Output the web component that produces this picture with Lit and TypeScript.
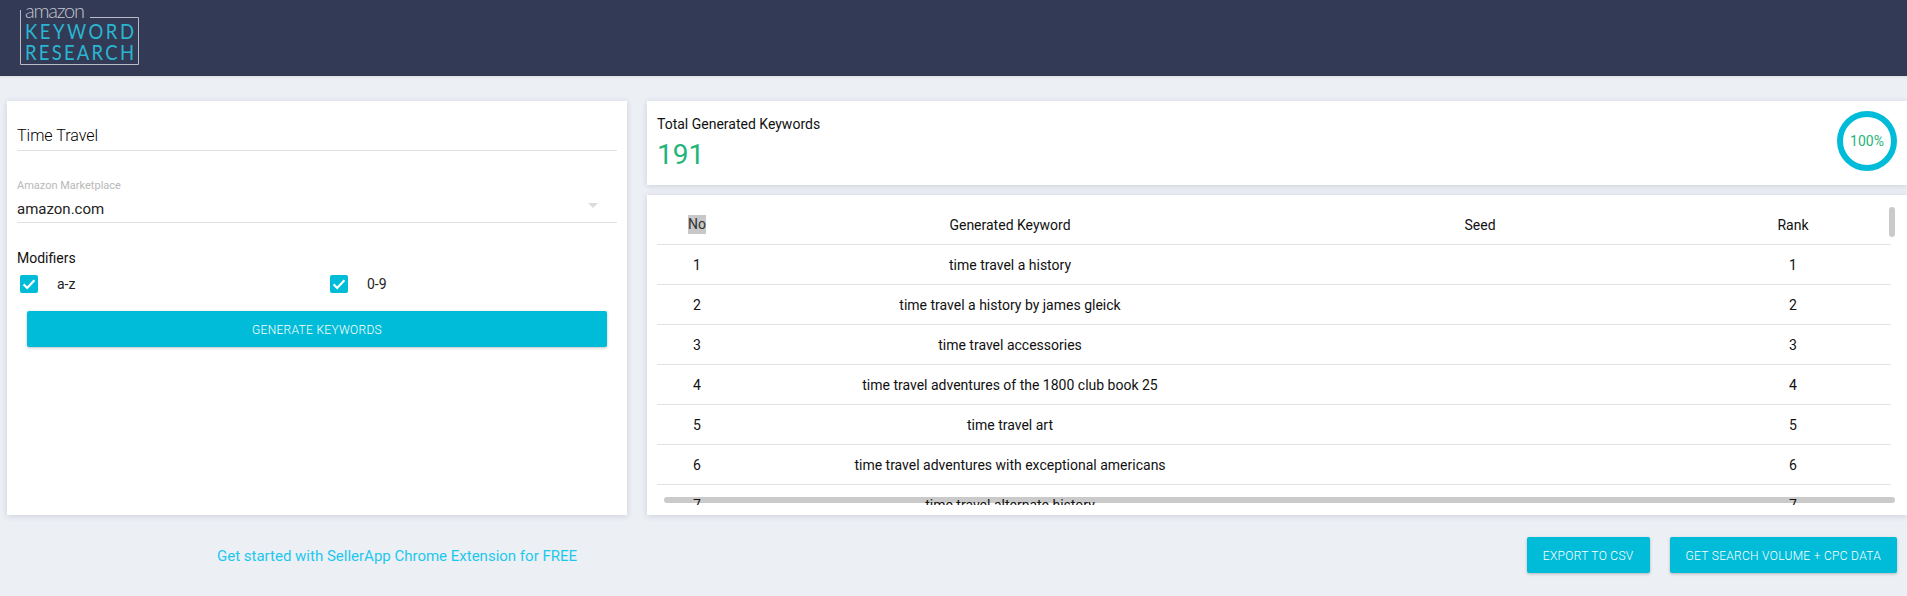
import { LitElement, html, css, svg } from "lit";
import { customElement } from "lit/decorators.js";

const ROWS = [
  "time travel a history",
  "time travel a history by james gleick",
  "time travel accessories",
  "time travel adventures of the 1800 club book 25",
  "time travel art",
  "time travel adventures with exceptional americans",
  "time travel alternate history",
];

const check = svg`<svg class="tick" viewBox="0 0 18 18" width="18" height="18"><path d="M3.6 9.4l3.6 3.6L14.4 5.2" fill="none" stroke="#fff" stroke-width="2.2"/></svg>`;

@customElement("app-root")
export class AppRoot extends LitElement {
  static styles = css`
    :host {
      display: block;
      width: 1907px;
      height: 596px;
      overflow: hidden;
      background: #eceff4;
      font-family: Roboto, "Liberation Sans", sans-serif;
      font-size: 14px;
      color: #111;
    }
    .header {
      height: 76px;
      background: #333a55;
      box-shadow: 0 1px 2px rgba(0, 0, 0, 0.08);
    }
    .logo {
      display: block;
    }
    .main {
      display: flex;
      gap: 20px;
      padding: 25px 0 0 7px;
      height: 414px;
    }
    .card {
      background: #fff;
      box-shadow: 0 1px 6px rgba(60, 70, 100, 0.18);
    }
    .left {
      width: 600px;
      padding: 19px 10px 0;
      flex: none;
    }
    .field {
      border-bottom: 1px solid #e0e0e0;
      color: #222;
    }
    .field.input {
      font-size: 16px;
      font-weight: 300;
      color: #000;
      padding-top: 2px;
      line-height: 28px;
    }
    .label {
      margin-top: 28px;
      font-size: 11px;
      line-height: 14px;
      color: #b8b8b8;
    }
    .field.select {
      font-size: 15px;
      margin-top: 3px;
      line-height: 26px;
      display: flex;
      justify-content: space-between;
      align-items: flex-start;
      padding-right: 19px;
    }
    .arrow {
      width: 0;
      height: 0;
      margin-top: 7px;
      border-left: 5px solid transparent;
      border-right: 5px solid transparent;
      border-top: 5px solid #dcdcdc;
    }
    .mods {
      margin-top: 26px;
      line-height: 18px;
      font-size: 14px;
      color: #111;
    }
    .checks {
      display: grid;
      grid-template-columns: 310px 1fr;
      margin-top: 8px;
      padding-left: 3px;
    }
    .check {
      display: flex;
      align-items: center;
      gap: 19px;
      line-height: 18px;
      color: #222;
    }
    .box {
      width: 18px;
      height: 18px;
      border-radius: 2px;
      background: #00bcd8;
      display: block;
    }
    .tick {
      display: block;
    }
    .btn {
      display: flex;
      align-items: center;
      justify-content: center;
      box-sizing: border-box;
      height: 36px;
      padding-top: 1px;
      background: #00bcd8;
      color: #fff;
      font-size: 12px;
      font-weight: 300;
      letter-spacing: 0.3px;
      text-transform: uppercase;
      border-radius: 2px;
      box-shadow: 0 1px 3px rgba(0, 0, 0, 0.25);
    }
    .left .btn {
      margin: 18px 10px 0;
    }
    .right {
      flex: 1;
      min-width: 0;
      display: flex;
      flex-direction: column;
      gap: 10px;
    }
    .stat {
      height: 84px;
      flex: none;
      box-sizing: border-box;
      padding: 10px 10px 0;
      display: flex;
      justify-content: space-between;
    }
    .stat-title {
      margin-top: 4px;
      line-height: 18px;
    }
    .stat-num {
      font-size: 28px;
      line-height: 34px;
      margin-top: 5px;
      color: #1fb578;
    }
    .ring {
      width: 60px;
      height: 60px;
      box-sizing: border-box;
      border: 6px solid #00bcd8;
      border-radius: 50%;
      display: flex;
      align-items: center;
      justify-content: center;
      color: #1fb578;
      font-size: 14px;
    }
    .table-card {
      flex: 1;
      position: relative;
      padding: 10px 16px 10px 10px;
      box-sizing: border-box;
      min-height: 0;
    }
    .scroll {
      position: relative;
      z-index: 1;
      height: 300px;
      overflow: hidden;
    }
    table {
      width: 1252px;
      table-layout: fixed;
      border-collapse: collapse;
    }
    th,
    td {
      height: 39px;
      padding: 0;
      text-align: center;
      font-weight: 400;
      font-size: 14px;
      color: #111;
      border-bottom: 1px solid #e2e2e2;
    }
    .sel {
      background: #c8c8c8;
      display: inline-block;
      line-height: 19px;
      color: #333;
    }
    .sb-v {
      position: absolute;
      left: 1242px;
      top: 12px;
      width: 6px;
      height: 30px;
      border-radius: 3px;
      background: #cacaca;
    }
    .sb-h {
      position: absolute;
      left: 17px;
      top: 302px;
      width: 1231px;
      height: 6px;
      border-radius: 3px;
      background: #cacaca;
    }
    .footer {
      display: flex;
      align-items: flex-start;
      padding: 22px 10px 0 217px;
    }
    .promo {
      color: #1cc8ee;
      font-size: 15px;
      line-height: 38px;
    }
    .actions {
      margin-left: auto;
      display: flex;
      gap: 20px;
    }
    .actions .btn {
      padding: 1px 16px 0;
    }
  `;

  render() {
    return html`
      <div class="header">
        <svg class="logo" width="160" height="76" viewBox="0 0 160 76">
          <path d="M20.5 10V64.5H138.5V17.5H90" fill="none" stroke="#b9bcc6" stroke-width="1"/>
          <text x="25" y="18" font-family="Lato, sans-serif" font-size="20" font-weight="300" fill="#c3c6cf" textLength="60">amazon</text>
          <text transform="translate(25 39) scale(1 1.12)" font-family="Lato, sans-serif" font-size="18.5" fill="#2ab5d1" textLength="109">KEYWORD</text>
          <text transform="translate(25 60) scale(1 1.12)" font-family="Lato, sans-serif" font-size="18.5" fill="#2ab5d1" textLength="109">RESEARCH</text>
        </svg>
      </div>
      <div class="main">
        <div class="card left">
          <div class="field input">Time Travel</div>
          <div class="label">Amazon Marketplace</div>
          <div class="field select"><span>amazon.com</span><span class="arrow"></span></div>
          <div class="mods">Modifiers</div>
          <div class="checks">
            <div class="check"><span class="box">${check}</span>a-z</div>
            <div class="check"><span class="box">${check}</span>0-9</div>
          </div>
          <div class="btn">Generate Keywords</div>
        </div>
        <div class="right">
          <div class="card stat">
            <div>
              <div class="stat-title">Total Generated Keywords</div>
              <div class="stat-num">191</div>
            </div>
            <div class="ring">100%</div>
          </div>
          <div class="card table-card">
            <div class="sb-v"></div>
            <div class="sb-h"></div>
            <div class="scroll">
              <table>
                <colgroup>
                  <col style="width:80px" /><col style="width:546px" /><col style="width:394px" /><col style="width:232px" />
                </colgroup>
                <thead>
                  <tr>
                    <th><span class="sel">No</span></th>
                    <th>Generated Keyword</th>
                    <th>Seed</th>
                    <th>Rank</th>
                  </tr>
                </thead>
                <tbody>
                  ${ROWS.map(
                    (k, i) => html`<tr>
                      <td>${i + 1}</td>
                      <td>${k}</td>
                      <td></td>
                      <td>${i + 1}</td>
                    </tr>`
                  )}
                </tbody>
              </table>
            </div>
          </div>
        </div>
      </div>
      <div class="footer">
        <div class="promo">Get started with SellerApp Chrome Extension for FREE</div>
        <div class="actions">
          <div class="btn">Export to CSV</div>
          <div class="btn">Get Search Volume + CPC Data</div>
        </div>
      </div>
    `;
  }
}
